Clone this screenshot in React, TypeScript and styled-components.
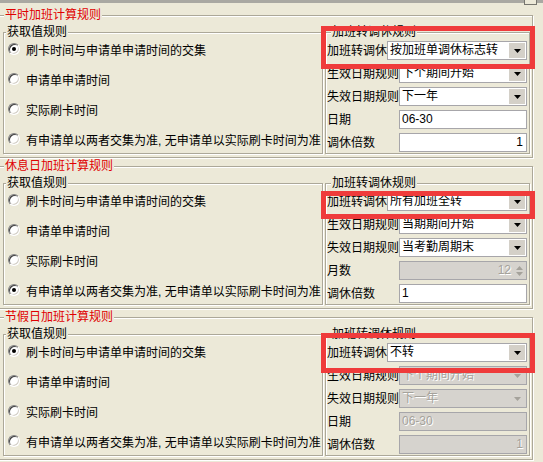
import React from 'react';
import styled, { createGlobalStyle, css } from 'styled-components';

const GlobalStyle = createGlobalStyle`
  html, body {
    margin: 0;
    padding: 0;
  }
  body {
    background: #ece9d8;
    font-family: "Liberation Sans", "Noto Sans CJK SC", sans-serif;
    font-size: 12px;
    color: #000;
    overflow: hidden;
  }
`;

const etched = css`
  border: 1px solid #aca899;
  box-shadow: inset 1px 1px 0 #fff, 1px 1px 0 #fff;
`;

const Page = styled.div`
  width: 543px;
  height: 462px;
  overflow: hidden;
  background: #ece9d8;
`;

const TopBar = styled.div`
  height: 3px;
  background: #a9a8a2;
  display: flex;
  justify-content: flex-end;
  padding-right: 6px;
`;

const TopButton = styled.div`
  width: 11px;
  height: 4px;
  border: 1px solid #77766f;
  border-top: none;
  background: #ece9d8;
`;

const Sections = styled.div`
  display: flex;
  flex-direction: column;
  gap: 1px;
  margin: 5px 0 0 -2px;
`;

const SectionWrap = styled.div`
  position: relative;
`;

const Section = styled.fieldset`
  margin: 0;
  padding: 0;
  width: 535px;
  box-sizing: border-box;
  ${etched}
`;

const Legend = styled.legend<{ $red?: boolean; $offset: number }>`
  margin-left: ${(p) => p.$offset}px;
  padding: 0 1px;
  font-size: 12px;
  line-height: ${(p) => (p.$red ? 14 : 12)}px;
  color: ${(p) => (p.$red ? '#e00000' : '#000')};
  background: #ece9d8;
  white-space: nowrap;
`;

const SectionBody = styled.div`
  display: flex;
  gap: 2px;
  padding: 4px 2px 3px 4px;
`;

const GroupBox = styled.fieldset<{ $w: number }>`
  margin: 0;
  padding: 0;
  width: ${(p) => p.$w}px;
  min-width: 0;
  box-sizing: border-box;
  overflow: hidden;
  ${etched}
`;

const RadioList = styled.div`
  display: flex;
  flex-direction: column;
  gap: 8px;
  padding: 0 0 3px 4px;
`;

const RadioRow = styled.div`
  display: flex;
  align-items: center;
  height: 22px;
  white-space: nowrap;
`;

const RadioDot = styled.span<{ $checked?: boolean }>`
  position: relative;
  flex: none;
  width: 12px;
  height: 12px;
  box-sizing: border-box;
  margin-right: 6px;
  border-radius: 50%;
  border: 1px solid;
  border-color: #808080 #fff #fff #808080;
  background: #fff;
  box-shadow: inset 1px 1px 0 #404040, inset -1px -1px 0 #d4d0c8;
  ${(p) =>
    p.$checked &&
    css`
      &::after {
        content: '';
        position: absolute;
        left: 3px;
        top: 3px;
        width: 4px;
        height: 4px;
        border-radius: 50%;
        background: #000;
      }
    `}
`;

const FieldList = styled.div`
  display: flex;
  flex-direction: column;
  gap: 4px;
  padding: 3px 2px 1px 1px;
`;

const FieldRow = styled.div`
  display: flex;
  align-items: center;
  height: 19px;
`;

const Label = styled.span<{ $w: number }>`
  flex: none;
  width: ${(p) => p.$w}px;
  white-space: nowrap;
  line-height: 19px;
  padding-top: 2px;
`;

const Control = styled.div<{ $disabled?: boolean; $align?: 'left' | 'right' }>`
  flex: 1;
  min-width: 0;
  height: 19px;
  box-sizing: border-box;
  display: flex;
  align-items: center;
  border: 1px solid #a7a6aa;
  background: ${(p) => (p.$disabled ? '#d6d3ce' : '#fff')};
  color: ${(p) => (p.$disabled ? '#a5a29b' : '#000')};
  text-shadow: ${(p) => (p.$disabled ? '1px 1px 0 #fff' : 'none')};
  padding-left: 2px;
  justify-content: ${(p) => (p.$align === 'right' ? 'flex-end' : 'flex-start')};
  white-space: nowrap;
  overflow: hidden;
`;

const ControlText = styled.span<{ $pad?: number }>`
  flex: ${(p) => (p.$pad === undefined ? 1 : 'none')};
  padding-right: ${(p) => p.$pad ?? 0}px;
  line-height: 17px;
`;

const DropButton = styled.span<{ $disabled?: boolean }>`
  flex: none;
  width: 16px;
  height: 15px;
  margin-right: 1px;
  background: ${(p) => (p.$disabled ? '#d6d3ce' : '#d4d0c8')};
  display: flex;
  align-items: center;
  justify-content: center;
`;

const Spin = styled.span`
  flex: none;
  width: 11px;
  height: 15px;
  margin-right: 1px;
  display: flex;
  flex-direction: column;
  align-items: center;
  justify-content: center;
  gap: 2px;
`;

const Mark = styled.div<{ $top: number; $height: number }>`
  position: absolute;
  left: 323px;
  top: ${(p) => p.$top}px;
  width: 214px;
  height: ${(p) => p.$height}px;
  box-sizing: border-box;
  border: 5px solid #ef3b3b;
  pointer-events: none;
`;

type Field = {
  label: string;
  kind: 'combo' | 'text' | 'spin';
  value: string;
  align?: 'left' | 'right';
  disabled?: boolean;
};

type Rule = {
  title: string;
  checked: number;
  fields: Field[];
  mark: { top: number; height: number };
};

const options = [
  '刷卡时间与申请单申请时间的交集',
  '申请单申请时间',
  '实际刷卡时间',
  '有申请单以两者交集为准, 无申请单以实际刷卡时间为准',
];

const rules: Rule[] = [
  {
    title: '平时加班计算规则',
    checked: 0,
    mark: { top: 18, height: 43 },
    fields: [
      { label: '加班转调休', kind: 'combo', value: '按加班单调休标志转' },
      { label: '生效日期规则', kind: 'combo', value: '下个期间开始' },
      { label: '失效日期规则', kind: 'combo', value: '下一年' },
      { label: '日期', kind: 'text', value: '06-30' },
      { label: '调休倍数', kind: 'text', value: '1', align: 'right' },
    ],
  },
  {
    title: '休息日加班计算规则',
    checked: 3,
    mark: { top: 32, height: 28 },
    fields: [
      { label: '加班转调休', kind: 'combo', value: '所有加班全转' },
      { label: '生效日期规则', kind: 'combo', value: '当期期间开始' },
      { label: '失效日期规则', kind: 'combo', value: '当考勤周期末' },
      { label: '月数', kind: 'spin', value: '12', disabled: true },
      { label: '调休倍数', kind: 'text', value: '1' },
    ],
  },
  {
    title: '节假日加班计算规则',
    checked: 0,
    mark: { top: 23, height: 40 },
    fields: [
      { label: '加班转调休', kind: 'combo', value: '不转' },
      { label: '生效日期规则', kind: 'combo', value: '下个期间开始', disabled: true },
      { label: '失效日期规则', kind: 'combo', value: '下一年', disabled: true },
      { label: '日期', kind: 'text', value: '06-30', disabled: true },
      { label: '调休倍数', kind: 'text', value: '1', align: 'right', disabled: true },
    ],
  },
];

function Arrow({ up, color }: { up?: boolean; color: string }) {
  return (
    <svg width="7" height="4" viewBox="0 0 7 4">
      <polygon points={up ? '0,4 7,4 3.5,0' : '0,0 7,0 3.5,4'} fill={color} />
    </svg>
  );
}

function FieldControl({ field }: { field: Field }) {
  const { kind, value, disabled, align } = field;
  if (kind === 'combo') {
    return (
      <Control $disabled={disabled}>
        <ControlText>{value}</ControlText>
        <DropButton $disabled={disabled}>
          <Arrow color={disabled ? '#a5a29b' : '#000'} />
        </DropButton>
      </Control>
    );
  }
  if (kind === 'spin') {
    return (
      <Control $disabled={disabled} $align="right">
        <ControlText $pad={3}>{value}</ControlText>
        <Spin>
          <Arrow up color="#a5a29b" />
          <Arrow color="#a5a29b" />
        </Spin>
      </Control>
    );
  }
  return (
    <Control $disabled={disabled} $align={align}>
      <ControlText $pad={align === 'right' ? 3 : undefined}>{value}</ControlText>
    </Control>
  );
}

function RuleSection({ rule }: { rule: Rule }) {
  return (
    <SectionWrap>
      <Section>
        <Legend $red $offset={5}>
          {rule.title}
        </Legend>
        <SectionBody>
          <GroupBox $w={320}>
            <Legend $offset={2}>获取值规则</Legend>
            <RadioList>
              {options.map((o, i) => (
                <RadioRow key={o}>
                  <RadioDot $checked={i === rule.checked} />
                  {o}
                </RadioRow>
              ))}
            </RadioList>
          </GroupBox>
          <GroupBox $w={205}>
            <Legend $offset={5}>加班转调休规则</Legend>
            <FieldList>
              {rule.fields.map((f, i) => (
                <FieldRow key={f.label}>
                  <Label $w={i === 0 ? 60 : 72}>{f.label}</Label>
                  <FieldControl field={f} />
                </FieldRow>
              ))}
            </FieldList>
          </GroupBox>
        </SectionBody>
      </Section>
      <Mark $top={rule.mark.top} $height={rule.mark.height} />
    </SectionWrap>
  );
}

export default function App() {
  return (
    <Page>
      <GlobalStyle />
      <TopBar>
        <TopButton />
      </TopBar>
      <Sections>
        {rules.map((r) => (
          <RuleSection key={r.title} rule={r} />
        ))}
      </Sections>
    </Page>
  );
}
